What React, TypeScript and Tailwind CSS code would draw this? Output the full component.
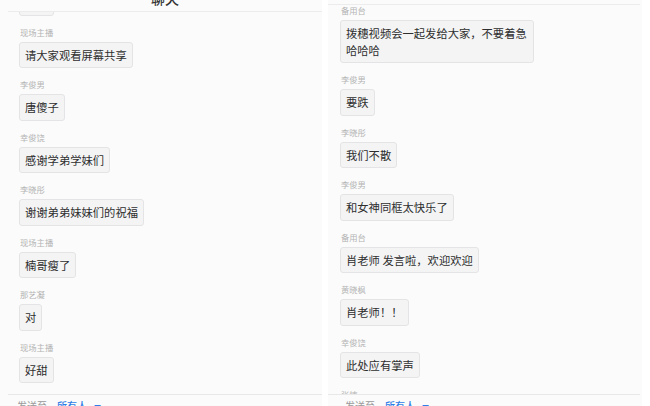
import React from "react";

interface Msg {
  name: string;
  text: string;
}

const leftMsgs: Msg[] = [
  { name: "现场主播", text: "请大家观看屏幕共享" },
  { name: "李俊男", text: "唐傻子" },
  { name: "幸俊饶", text: "感谢学弟学妹们" },
  { name: "李晓彤", text: "谢谢弟弟妹妹们的祝福" },
  { name: "现场主播", text: "楠哥瘦了" },
  { name: "那艺凝", text: "对" },
  { name: "现场主播", text: "好甜" },
];

const rightMsgs: Msg[] = [
  { name: "备用台", text: "拨穗视频会一起发给大家，不要着急哈哈哈" },
  { name: "李俊男", text: "要跌" },
  { name: "李晓彤", text: "我们不散" },
  { name: "李俊男", text: "和女神同框太快乐了" },
  { name: "备用台", text: "肖老师 发言啦，欢迎欢迎" },
  { name: "黄晓枫", text: "肖老师！！" },
  { name: "幸俊饶", text: "此处应有掌声" },
  { name: "张楠", text: "鼓掌" },
];

const font = { fontFamily: '"Noto Sans CJK SC", "Noto Sans", sans-serif' };

const Bubble = ({ text }: { text: string }) => (
  <div className="self-start max-w-[194px] rounded-[3px] border border-[#e4e4e6] bg-[#f4f4f5] px-[5px] py-[4px] text-[11.3px] leading-[16.5px] text-[#2e2e2e]">
    {text}
  </div>
);

const Message = ({ msg }: { msg: Msg }) => (
  <div className="flex flex-col mb-[11px]">
    <div className="pl-[1px] text-[8.3px] leading-[10px] text-[#b4b4b4] mb-[5px]">
      {msg.name}
    </div>
    <Bubble text={msg.text} />
  </div>
);

const Footer = ({ className }: { className: string }) => (
  <div
    className={`h-[12px] shrink-0 border-t border-[#e8e8e8] flex items-start pt-[4px] text-[10px] leading-[14px] ${className}`}
  >
    <span className="text-[#9a9a9a]">发送至</span>
    <span className="ml-[10px] text-[#2f7fe6] font-medium">所有人</span>
    <span className="ml-[7px] text-[#2f7fe6] text-[7px] leading-[16px]">▼</span>
  </div>
);

const App = () => {
  return (
    <div className="w-[650px] h-[406px] overflow-hidden bg-white flex" style={font}>
      {/* left phone */}
      <div className="w-[322px] h-full bg-[#fbfbfb] flex flex-col">
        <div className="ml-[8px] h-[12px] shrink-0 overflow-hidden border-b border-[#ececec] flex justify-center">
          <div className="-mt-[11px] text-[14px] leading-[18px] font-medium text-[#333]">
            聊天
          </div>
        </div>
        <div className="flex-1 overflow-hidden pl-[19px] flex flex-col">
          <div className="-mt-[23px] mb-[11px] self-start">
            <Bubble text="哈哈" />
          </div>
          {leftMsgs.map((m, i) => (
            <Message key={i} msg={m} />
          ))}
        </div>
        <Footer className="ml-[8px] pl-[9px]" />
      </div>

      <div className="w-[6px]" />

      {/* right phone */}
      <div className="w-[314px] h-full bg-[#fbfbfb] flex flex-col">
        <div className="h-[5px] shrink-0 border-b border-[#ececec] mr-[2px]" />
        <div className="flex-1 overflow-hidden pl-[12px] flex flex-col">
          {rightMsgs.map((m, i) => (
            <Message key={i} msg={m} />
          ))}
        </div>
        <Footer className="mr-[2px] pl-[17px]" />
      </div>
    </div>
  );
};

export default App;
